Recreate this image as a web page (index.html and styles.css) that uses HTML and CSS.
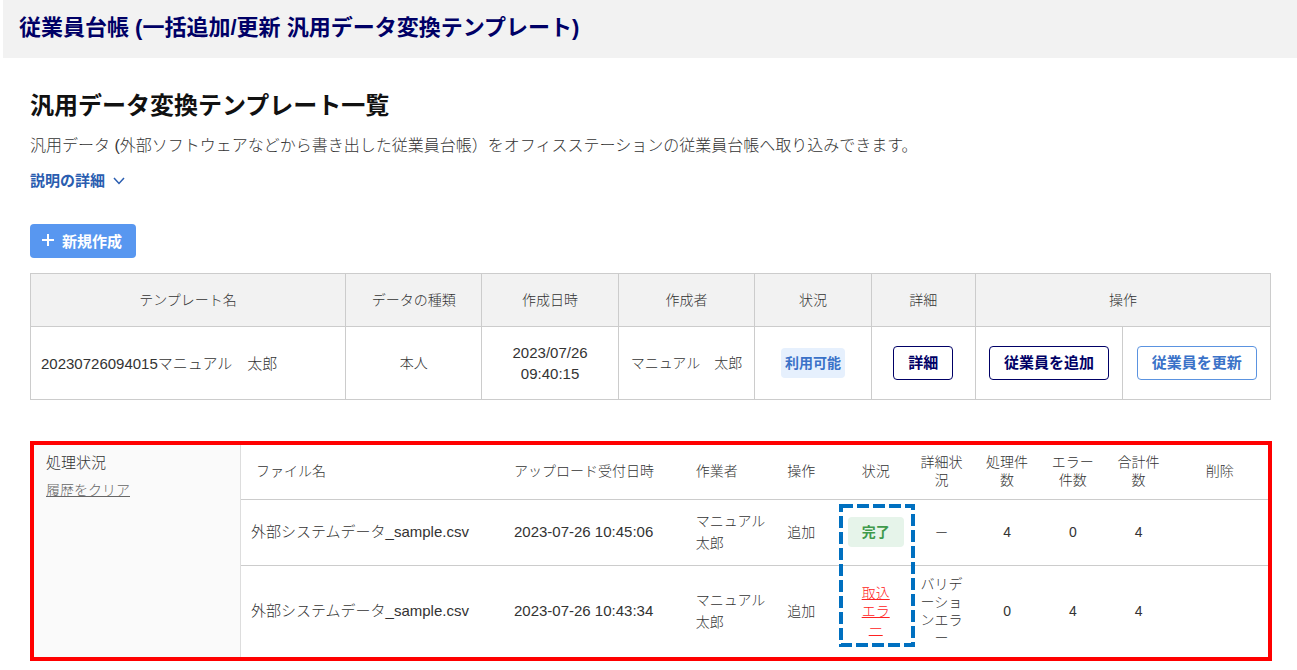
FILE: index.html
```html
<!DOCTYPE html>
<html lang="ja">
<head>
    <meta charset="UTF-8">
    <meta name="viewport" content="width=device-width, initial-scale=1.0">
    <title>従業員台帳</title>
    <link rel="stylesheet" href="styles.css">
</head>
<body>
    <header class="page-header">
        <h1>従業員台帳 (一括追加/更新 汎用データ変換テンプレート)</h1>
    </header>
    <main class="container">
        <h2>汎用データ変換テンプレート一覧</h2>
        <p class="lead">汎用データ (外部ソフトウェアなどから書き出した従業員台帳）をオフィスステーションの従業員台帳へ取り込みできます。</p>
        <button type="button" class="more">
            説明の詳細
            <svg width="12" height="8" viewBox="0 0 12 8" aria-hidden="true"><path d="M1 1l5 5.500L11 1" fill="none" stroke="currentColor" stroke-width="1.500"/></svg>
        </button>
        <button type="button" class="create">
            <svg width="12" height="12" viewBox="0 0 12 12" aria-hidden="true"><path d="M6 0v12M0 6h12" fill="none" stroke="currentColor" stroke-width="2"/></svg>
            新規作成
        </button>

        <table class="templates">
            <colgroup>
                <col class="t-name"><col class="t-mid"><col class="t-mid"><col class="t-mid">
                <col class="t-state"><col class="t-detail"><col class="t-action"><col class="t-action">
            </colgroup>
            <thead>
                <tr>
                    <th>テンプレート名</th>
                    <th>データの種類</th>
                    <th>作成日時</th>
                    <th>作成者</th>
                    <th>状況</th>
                    <th>詳細</th>
                    <th colspan="2">操作</th>
                </tr>
            </thead>
            <tbody>
                <tr>
                    <td class="left">20230726094015マニュアル　太郎</td>
                    <td>本人</td>
                    <td class="latin">2023/07/26<br>09:40:15</td>
                    <td>マニュアル　太郎</td>
                    <td><span class="badge blue">利用可能</span></td>
                    <td><button type="button" class="btn">詳細</button></td>
                    <td><button type="button" class="btn">従業員を追加</button></td>
                    <td><button type="button" class="btn light">従業員を更新</button></td>
                </tr>
            </tbody>
        </table>

        <section class="history">
            <div class="side">
                <h3>処理状況</h3>
                <a href="#">履歴をクリア</a>
            </div>
            <div class="jobs-wrap">
                <table class="jobs">
                    <colgroup>
                        <col class="j-file"><col class="j-date"><col class="j-user"><col class="j-type">
                        <col class="j-num"><col class="j-num"><col class="j-num"><col class="j-num"><col class="j-num">
                        <col class="j-del">
                    </colgroup>
                    <thead>
                        <tr>
                            <th class="left file-head">ファイル名</th>
                            <th class="left">アップロード受付日時</th>
                            <th class="left">作業者</th>
                            <th class="left">操作</th>
                            <th>状況</th>
                            <th>詳細状況</th>
                            <th>処理件数</th>
                            <th>エラー件数</th>
                            <th>合計件数</th>
                            <th>削除</th>
                        </tr>
                    </thead>
                    <tbody>
                        <tr>
                            <td class="left latin">外部システムデータ_sample.csv</td>
                            <td class="left latin">2023-07-26 10:45:06</td>
                            <td class="left user">マニュアル<br>太郎</td>
                            <td class="left">追加</td>
                            <td class="state"><span class="badge green">完了</span></td>
                            <td>－</td>
                            <td>4</td>
                            <td>0</td>
                            <td>4</td>
                            <td></td>
                        </tr>
                        <tr class="error-row">
                            <td class="left latin">外部システムデータ_sample.csv</td>
                            <td class="left latin">2023-07-26 10:43:34</td>
                            <td class="left user">マニュアル<br>太郎</td>
                            <td class="left">追加</td>
                            <td class="failed"><a href="#">取込エラー</a></td>
                            <td class="reason">バリデーションエラー</td>
                            <td>0</td>
                            <td>4</td>
                            <td>4</td>
                            <td></td>
                        </tr>
                    </tbody>
                </table>
                <!-- dashed marker over the status column -->
                <svg class="marker" width="76" height="143" aria-hidden="true"><rect x="2" y="2" width="72" height="139" fill="none" stroke="#0070c0" stroke-width="4" stroke-dasharray="12 4"/></svg>
            </div>
        </section>
    </main>
</body>
</html>
```
FILE: styles.css
```css
* {
    box-sizing: border-box;
}
body {
    margin: 0;
    background: #fff;
    color: #333;
    font-family: "Liberation Sans", "Noto Sans CJK JP", sans-serif;
    font-size: 14px;
    font-weight: 300;
}
button {
    font-family: inherit;
    font-weight: bold;
    cursor: pointer;
}
h1, h2, h3, p {
    margin: 0;
}
.page-header {
    margin-left: 3px;
    padding: 12px 16px 14px;
    background: #f2f2f2;
}
h1 {
    color: #006;
    font-size: 22px;
    line-height: 32px;
}
.container {
    padding: 32px 26px 0 30px;
}
h2 {
    color: #111;
    font-size: 24px;
    line-height: 32px;
}
.lead {
    margin-top: 12px;
    font-size: 16px;
    line-height: 24px;
}
.more {
    display: flex;
    align-items: center;
    gap: 8px;
    margin-top: 12px;
    padding: 0;
    border: 0;
    background: none;
    color: #2a5db0;
    font-size: 15px;
    line-height: 22px;
}
.create {
    display: flex;
    align-items: center;
    gap: 8px;
    height: 34px;
    margin: 32px 0 15px;
    padding: 0 14px 2px 12px;
    border: 0;
    border-radius: 4px;
    background: #5897f0;
    color: #fff;
    font-size: 15px;
}

/* tables */
table {
    width: 100%;
    table-layout: fixed;
    border-collapse: collapse;
}
th, td {
    padding: 0 8px;
    font-weight: 300;
    line-height: 18px;
    text-align: center;
}
.left {
    text-align: left;
}
.latin {
    font-size: 15px;
}
.templates th, .templates td {
    border: 1px solid #ccc;
}
.templates th {
    height: 53px;
    background: #f2f2f2;
}
.templates td {
    height: 73px;
    padding: 0 4px;
    line-height: 21px;
}
.templates td.left {
    padding-left: 10px;
    font-size: 15px;
}
.t-name { width: 25.4%; }
.t-mid { width: 11%; }
.t-state { width: 9.4%; }
.t-detail { width: 8.4%; }
.t-action { width: 11.9%; }

.badge {
    display: inline-block;
    border-radius: 4px;
    font-weight: bold;
    line-height: 30px;
}
.blue {
    padding: 0 4px;
    background: #e6f0fd;
    color: #3a72c8;
}
.green {
    width: 56px;
    background: #e6f4ea;
    color: #3f9a4b;
}
.btn {
    height: 34px;
    padding: 0 14px 3px;
    border: 1px solid #006;
    border-radius: 4px;
    background: #fff;
    color: #006;
    font-size: 15px;
    white-space: nowrap;
}
.light {
    border-color: #5b93e0;
    color: #3a72c8;
}

/* processing history */
.history {
    display: flex;
    margin-top: 41px;
    margin-right: -1px;
    border: 4px solid #f00;
}
.side {
    flex: 0 0 207px;
    padding: 7px 12px;
    border-right: 1px solid #ddd;
    background: #fafafa;
}
h3 {
    font-size: 15px;
    font-weight: 300;
    line-height: 22px;
}
.side a {
    display: inline-block;
    margin-top: 5px;
    color: #666;
    line-height: 22px;
}
.jobs-wrap {
    position: relative;
    flex: 1;
}
.jobs tr {
    height: 66px;
    border-bottom: 1px solid #ccc;
}
.jobs thead tr {
    height: 54px;
}
.jobs th {
    padding-bottom: 2px;
}
.jobs tr.error-row {
    height: 92px;
    border-bottom: 0;
}
.jobs td.left:first-child {
    padding-left: 10px;
}
.jobs .file-head {
    padding-left: 15px;
}
.jobs .user {
    line-height: 22px;
}
.jobs .state {
    padding: 0 4px;
}
.jobs .failed {
    padding: 0 18px;
    line-break: anywhere;
}
.failed a {
    color: #f22;
}
.jobs .reason {
    line-break: anywhere;
}
.j-file { width: 25.8%; }
.j-date { width: 17.7%; }
.j-user { width: 8.9%; }
.j-type { width: 6.2%; }
.j-num { width: 6.4%; }
.j-del { width: 9.4%; }
.marker {
    position: absolute;
    top: 59px;
    left: 58.2%;
}
```
